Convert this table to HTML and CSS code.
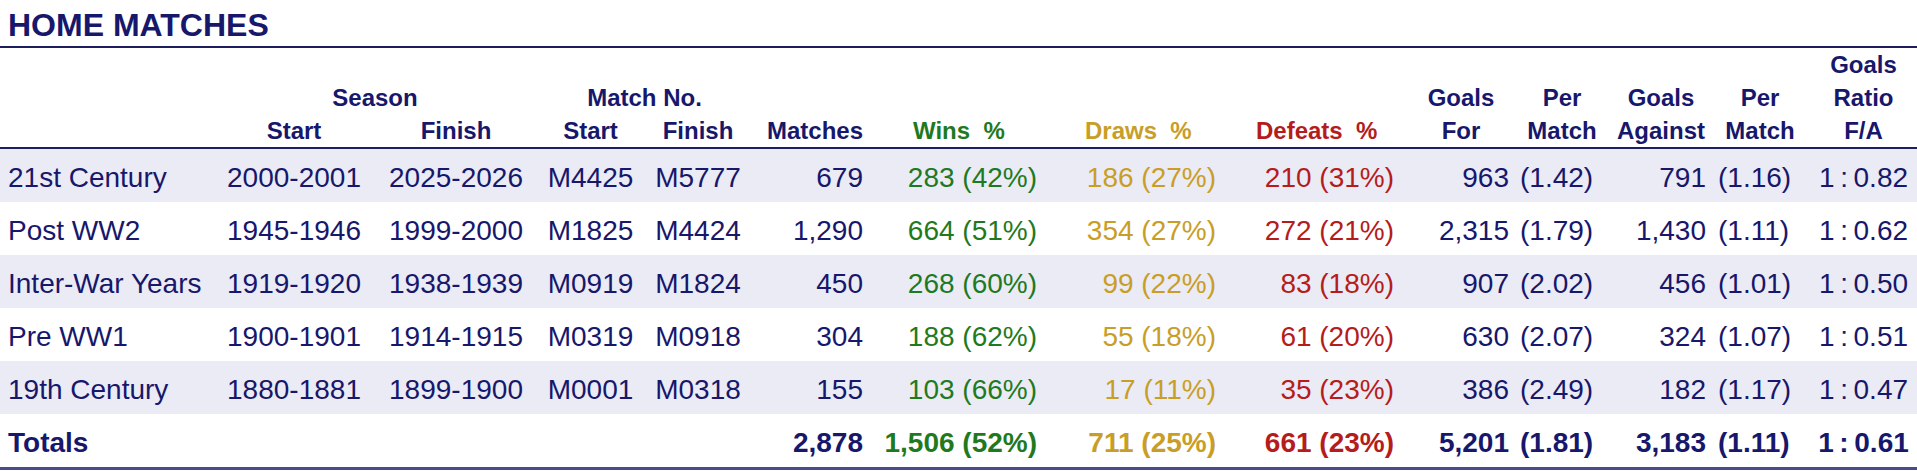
FILE: index.html
```html
<!DOCTYPE html>
<html lang="en">
<head>
<meta charset="utf-8">
<title>Home Matches</title>
<link rel="stylesheet" href="styles.css">
</head>
<body>
<h1 class="title">HOME MATCHES</h1>
<table class="stats">
  <colgroup>
    <col class="c-label">
    <col class="c-season">
    <col class="c-season">
    <col class="c-mstart">
    <col class="c-mfinish">
    <col class="c-matches">
    <col class="c-wins">
    <col class="c-draws">
    <col class="c-defeats">
    <col class="c-gf">
    <col class="c-gfpm">
    <col class="c-ga">
    <col class="c-gapm">
    <col class="c-ratio">
  </colgroup>
  <thead>
    <tr>
      <th colspan="13"></th>
      <th class="ctr">Goals</th>
    </tr>
    <tr>
      <th></th>
      <th colspan="2" class="ctr">Season</th>
      <th colspan="2" class="ctr">Match No.</th>
      <th></th><th></th><th></th><th></th>
      <th class="ctr">Goals</th>
      <th class="ctr">Per</th>
      <th class="ctr">Goals</th>
      <th class="ctr">Per</th>
      <th class="ctr">Ratio</th>
    </tr>
    <tr class="h-last">
      <th></th>
      <th class="ctr">Start</th>
      <th class="ctr">Finish</th>
      <th class="ctr">Start</th>
      <th class="ctr">Finish</th>
      <th class="h-matches">Matches</th>
      <th class="h-wins win">Wins&nbsp; %</th>
      <th class="h-draws draw">Draws&nbsp; %</th>
      <th class="h-defeats loss">Defeats&nbsp; %</th>
      <th class="ctr">For</th>
      <th class="ctr">Match</th>
      <th class="ctr">Against</th>
      <th class="ctr">Match</th>
      <th class="ctr">F/A</th>
    </tr>
  </thead>
  <tbody>
    <tr class="shade">
      <td class="label">21st Century</td>
      <td class="ctr">2000-2001</td><td class="ctr">2025-2026</td>
      <td class="ctr">M4425</td><td class="ctr">M5777</td>
      <td class="d-matches">679</td>
      <td class="d-wins win">283 (42%)</td>
      <td class="d-draws draw">186 (27%)</td>
      <td class="d-defeats loss">210 (31%)</td>
      <td class="d-gf">963</td><td class="d-pm">(1.42)</td>
      <td class="d-ga">791</td><td class="d-pm">(1.16)</td>
      <td class="ctr">1&thinsp;:&thinsp;0.82</td>
    </tr>
    <tr>
      <td class="label">Post WW2</td>
      <td class="ctr">1945-1946</td><td class="ctr">1999-2000</td>
      <td class="ctr">M1825</td><td class="ctr">M4424</td>
      <td class="d-matches">1,290</td>
      <td class="d-wins win">664 (51%)</td>
      <td class="d-draws draw">354 (27%)</td>
      <td class="d-defeats loss">272 (21%)</td>
      <td class="d-gf">2,315</td><td class="d-pm">(1.79)</td>
      <td class="d-ga">1,430</td><td class="d-pm">(1.11)</td>
      <td class="ctr">1&thinsp;:&thinsp;0.62</td>
    </tr>
    <tr class="shade">
      <td class="label">Inter-War Years</td>
      <td class="ctr">1919-1920</td><td class="ctr">1938-1939</td>
      <td class="ctr">M0919</td><td class="ctr">M1824</td>
      <td class="d-matches">450</td>
      <td class="d-wins win">268 (60%)</td>
      <td class="d-draws draw">99 (22%)</td>
      <td class="d-defeats loss">83 (18%)</td>
      <td class="d-gf">907</td><td class="d-pm">(2.02)</td>
      <td class="d-ga">456</td><td class="d-pm">(1.01)</td>
      <td class="ctr">1&thinsp;:&thinsp;0.50</td>
    </tr>
    <tr>
      <td class="label">Pre WW1</td>
      <td class="ctr">1900-1901</td><td class="ctr">1914-1915</td>
      <td class="ctr">M0319</td><td class="ctr">M0918</td>
      <td class="d-matches">304</td>
      <td class="d-wins win">188 (62%)</td>
      <td class="d-draws draw">55 (18%)</td>
      <td class="d-defeats loss">61 (20%)</td>
      <td class="d-gf">630</td><td class="d-pm">(2.07)</td>
      <td class="d-ga">324</td><td class="d-pm">(1.07)</td>
      <td class="ctr">1&thinsp;:&thinsp;0.51</td>
    </tr>
    <tr class="shade">
      <td class="label">19th Century</td>
      <td class="ctr">1880-1881</td><td class="ctr">1899-1900</td>
      <td class="ctr">M0001</td><td class="ctr">M0318</td>
      <td class="d-matches">155</td>
      <td class="d-wins win">103 (66%)</td>
      <td class="d-draws draw">17 (11%)</td>
      <td class="d-defeats loss">35 (23%)</td>
      <td class="d-gf">386</td><td class="d-pm">(2.49)</td>
      <td class="d-ga">182</td><td class="d-pm">(1.17)</td>
      <td class="ctr">1&thinsp;:&thinsp;0.47</td>
    </tr>
    <tr class="totals">
      <td class="label">Totals</td>
      <td></td><td></td><td></td><td></td>
      <td class="d-matches">2,878</td>
      <td class="d-wins win">1,506 (52%)</td>
      <td class="d-draws draw">711 (25%)</td>
      <td class="d-defeats loss">661 (23%)</td>
      <td class="d-gf">5,201</td><td class="d-pm">(1.81)</td>
      <td class="d-ga">3,183</td><td class="d-pm">(1.11)</td>
      <td class="ctr">1&thinsp;:&thinsp;0.61</td>
    </tr>
  </tbody>
</table>
</body>
</html>
```

FILE: styles.css
```css
html, body {
  margin: 0;
  padding: 0;
  background: #ffffff;
}

body {
  font-family: "Liberation Sans", Arial, sans-serif;
  color: #17176b;
  width: 1917px;
}

.title {
  margin: 0;
  padding: 4px 0 0 8px;
  height: 42px;
  line-height: 42px;
  font-size: 32px;
  font-weight: bold;
  color: #17176b;
  border-bottom: 2px solid #1e1e5e;
}

.stats {
  width: 1917px;
  table-layout: fixed;
  border-collapse: collapse;
  border-spacing: 0;
}

.c-label { width: 213px; }
.c-season { width: 162px; }
.c-mstart { width: 107px; }
.c-mfinish { width: 108px; }
.c-matches { width: 118px; }
.c-wins { width: 175px; }
.c-draws { width: 180px; }
.c-defeats { width: 185px; }
.c-gf { width: 102px; }
.c-gfpm { width: 100px; }
.c-ga { width: 98px; }
.c-gapm { width: 100px; }
.c-ratio { width: 107px; }

.stats th {
  padding: 0;
  height: 33px;
  line-height: 33px;
  font-size: 24px;
  font-weight: bold;
  white-space: nowrap;
  text-align: left;
  color: #17176b;
}

.stats .h-last th {
  border-bottom: 2px solid #1e1e5e;
}

.stats .ctr { text-align: center; }

.h-matches { text-align: right !important; padding-right: 7px !important; }
.h-wins { padding-left: 43px !important; }
.h-draws { padding-left: 40px !important; }
.h-defeats { padding-left: 31px !important; }

.stats td {
  padding: 4px 0 0 0;
  height: 49px;
  line-height: 49px;
  font-size: 28px;
  white-space: nowrap;
  color: #17176b;
}

.stats tr.shade td { background: #ebebf5; }

.stats td.label { padding-left: 8px; }

.d-matches { text-align: right; padding-right: 7px !important; }
.d-wins { text-align: right; padding-right: 8px !important; }
.d-draws { text-align: right; padding-right: 9px !important; }
.d-defeats { text-align: right; padding-right: 16px !important; }
.d-gf { text-align: right; padding-right: 3px !important; }
.d-ga { text-align: right; padding-right: 4px !important; }
.d-pm { text-align: left; padding-left: 8px !important; }

.stats .win { color: #1f7a1f; }
.stats .draw { color: #c99e26; }
.stats .loss { color: #b51c1c; }

.stats tr.totals td {
  font-weight: bold;
  border-bottom: 3px solid #4a4a8c;
}
```
